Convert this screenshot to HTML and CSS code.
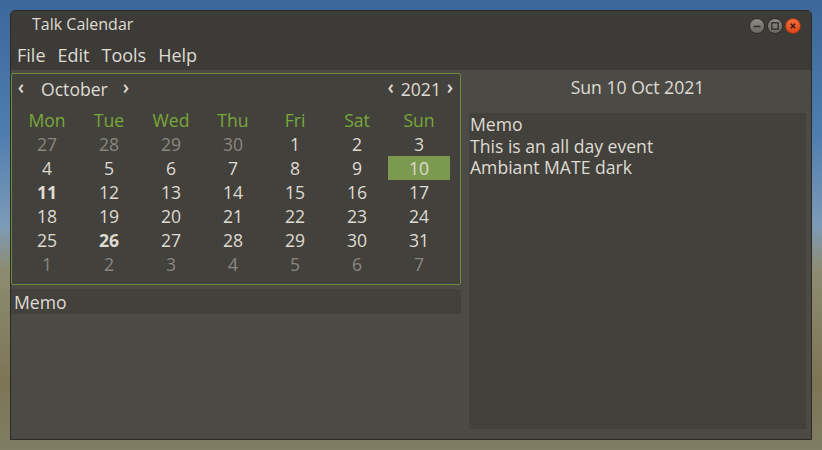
FILE: index.html
```html
<!DOCTYPE html>
<html>
<head>
<meta charset="utf-8">
<link rel="stylesheet" href="styles.css">
</head>
<body>
<div class="window">
  <div class="titlebar">
    <span class="title">Talk Calendar</span>
    <div class="wbuttons">
      <span class="wb wb-min"><svg width="10" height="10" viewBox="0 0 10 10"><path d="M1.5 5.5h7" stroke="#2e2d2a" stroke-width="1.4"/></svg></span>
      <span class="wb wb-max"><svg width="10" height="10" viewBox="0 0 10 10"><rect x="1.8" y="1.8" width="6.4" height="6.4" fill="none" stroke="#2e2d2a" stroke-width="1.3"/></svg></span>
      <span class="wb wb-close"><svg width="10" height="10" viewBox="0 0 10 10"><path d="M2.8 2.8l4.4 4.4M7.2 2.8l-4.4 4.4" stroke="#3a1a0c" stroke-width="1.4"/></svg></span>
    </div>
  </div>
  <div class="menubar">
    <span class="menu">File</span>
    <span class="menu">Edit</span>
    <span class="menu">Tools</span>
    <span class="menu">Help</span>
  </div>
  <div class="content">
    <div class="leftpane">
      <div class="calendar">
        <div class="calhead">
          <div class="sel sel-month">
            <span class="arrow">‹</span>
            <span class="month">October</span>
            <span class="arrow">›</span>
          </div>
          <div class="sel sel-year">
            <span class="arrow">‹</span>
            <span class="year">2021</span>
            <span class="arrow">›</span>
          </div>
        </div>
        <div class="grid">
          <span class="dn">Mon</span><span class="dn">Tue</span><span class="dn">Wed</span><span class="dn">Thu</span><span class="dn">Fri</span><span class="dn">Sat</span><span class="dn">Sun</span>
          <span class="d dim">27</span><span class="d dim">28</span><span class="d dim">29</span><span class="d dim">30</span><span class="d">1</span><span class="d">2</span><span class="d">3</span>
          <span class="d">4</span><span class="d">5</span><span class="d">6</span><span class="d">7</span><span class="d">8</span><span class="d">9</span><span class="d today">10</span>
          <span class="d bold">11</span><span class="d">12</span><span class="d">13</span><span class="d">14</span><span class="d">15</span><span class="d">16</span><span class="d">17</span>
          <span class="d">18</span><span class="d">19</span><span class="d">20</span><span class="d">21</span><span class="d">22</span><span class="d">23</span><span class="d">24</span>
          <span class="d">25</span><span class="d bold">26</span><span class="d">27</span><span class="d">28</span><span class="d">29</span><span class="d">30</span><span class="d">31</span>
          <span class="d dim">1</span><span class="d dim">2</span><span class="d dim">3</span><span class="d dim">4</span><span class="d dim">5</span><span class="d dim">6</span><span class="d dim">7</span>
        </div>
      </div>
      <div class="memobar">Memo</div>
    </div>
    <div class="rightpane">
      <div class="datehead">Sun 10 Oct 2021</div>
      <div class="memobox">
        <div class="line">Memo</div>
        <div class="line">This is an all day event</div>
        <div class="line">Ambiant MATE dark</div>
      </div>
    </div>
  </div>
</div>
</body>
</html>
```

FILE: styles.css
```css
html, body {
  margin: 0;
  padding: 0;
}
body {
  width: 822px;
  height: 450px;
  overflow: hidden;
  background: linear-gradient(180deg, #3b6898 0%, #4f7daf 30%, #7d9bb8 50%, #8d8c72 60%, #7d7554 85%, #7f7d64 100%);
  font-family: "Open Sans", "Noto Sans", sans-serif;
  color: #dfdbd2;
}
.window {
  margin: 10px 0 0 10px;
  width: 800px;
  height: 428px;
  border: 1px solid #2b2a27;
  border-radius: 5px 5px 0 0;
  background: #4b4a45;
  display: flex;
  flex-direction: column;
  overflow: hidden;
}
.titlebar {
  height: 29px;
  flex: none;
  background: #3c3b37;
  display: flex;
  align-items: center;
  justify-content: space-between;
  padding: 0 10px 0 21px;
}
.title {
  font-size: 16px;
  color: #dfdbd2;
  margin-top: -3px;
}
.wbuttons {
  display: flex;
  gap: 2px;
  margin-top: 1px;
}
.wb {
  box-sizing: border-box;
  width: 16px;
  height: 16px;
  border-radius: 50%;
  display: flex;
  align-items: center;
  justify-content: center;
  border: 1px solid #2e2d2a;
}
.wb-min, .wb-max {
  background: linear-gradient(180deg, #8c8a84, #6a6863);
}
.wb-close {
  background: linear-gradient(180deg, #f26d3d, #d9461c);
  border-color: #9a3414;
}
.menubar {
  height: 30px;
  flex: none;
  background: #3c3b37;
  display: flex;
  align-items: center;
}
.menu {
  font-size: 18px;
  padding: 0 6px 1px;
}
.content {
  flex: 1;
  display: flex;
  min-height: 0;
}
.leftpane {
  width: 450px;
  flex: none;
  padding-top: 3px;
  display: flex;
  flex-direction: column;
}
.calendar {
  height: 210px;
  border: 1px solid #6b8a3a;
  border-radius: 2px;
  background: #43413c;
  padding: 0 4px;
}
.calhead {
  height: 30px;
  display: flex;
  justify-content: space-between;
  align-items: center;
  margin-bottom: 4px;
}
.sel {
  display: flex;
  align-items: center;
}
.arrow {
  font-size: 19px;
  font-weight: 600;
  width: 10px;
  text-align: center;
  line-height: 1;
  position: relative;
  top: -2px;
}
.sel-month .arrow:last-child {
  margin-left: 13px;
}
.month {
  font-size: 17.6px;
  margin-left: 15px;
}
.year {
  font-size: 17.6px;
  margin: 0 4px 0 5px;
}
.sel-year {
  margin-right: 1px;
}
.grid {
  display: grid;
  grid-template-columns: repeat(7, 62px);
  grid-auto-rows: 24px;
  width: 434px;
}
.grid span {
  display: flex;
  align-items: center;
  justify-content: center;
  font-size: 17.6px;
}
.dn {
  color: #78a83a;
}
.dim {
  color: #8a8780;
}
.bold {
  font-weight: 700;
}
.today {
  background: #7c9a4f;
}
.memobar {
  margin-top: 4px;
  height: 25px;
  background: #43413c;
  font-size: 17.6px;
  padding-left: 3px;
  display: flex;
  align-items: center;
}
.rightpane {
  flex: 1;
  display: flex;
  flex-direction: column;
  padding: 0 5px 10px 8px;
}
.datehead {
  height: 43px;
  flex: none;
  display: flex;
  align-items: center;
  justify-content: center;
  font-size: 17.6px;
  padding-bottom: 9px;
  box-sizing: border-box;
}
.memobox {
  flex: 1;
  background: #43413c;
  font-size: 17.6px;
  padding: 1px 1px 0;
}
.line {
  height: 21.5px;
  line-height: 21.5px;
}
```
